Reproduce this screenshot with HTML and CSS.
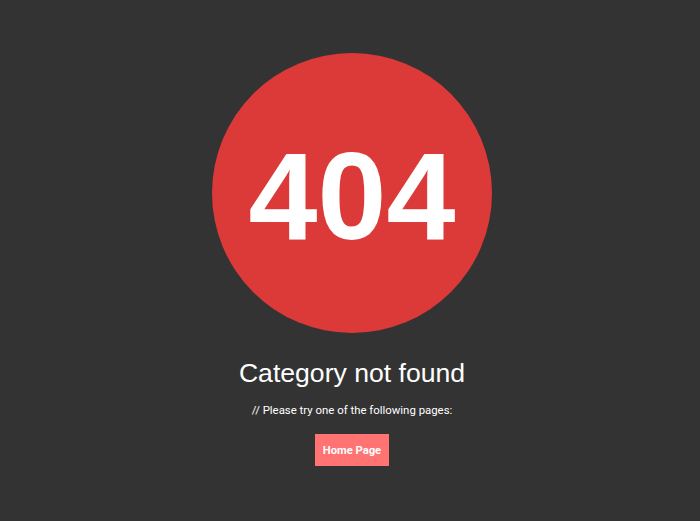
FILE: index.html
```html
<!DOCTYPE html>
<html>
<head>
<meta charset="utf-8">
<link rel="stylesheet" href="styles.css">
</head>
<body>
<main class="page">
  <div class="circle"><span class="code">404</span></div>
  <h1 class="title">Category not found</h1>
  <p class="hint">// Please try one of the following pages:</p>
  <a class="btn" href="#">Home Page</a>
</main>
</body>
</html>
```
FILE: styles.css
```css
html, body {
  margin: 0;
  padding: 0;
  background: #333333;
  height: 100%;
}
.page {
  display: flex;
  flex-direction: column;
  align-items: center;
  padding: 53px 0 0 4px;
}
.circle {
  width: 280px;
  height: 280px;
  box-sizing: border-box;
  padding-top: 6px;
  border-radius: 50%;
  background: #db3a38;
  display: flex;
  align-items: center;
  justify-content: center;
}
.code {
  font-family: "Liberation Sans", Arial, sans-serif;
  font-weight: bold;
  font-size: 124px;
  line-height: 1;
  color: #ffffff;
}
.title {
  margin: 24px 0 0;
  font-family: "Liberation Sans", Arial, sans-serif;
  font-weight: normal;
  font-size: 26.6px;
  line-height: 32px;
  color: #ffffff;
}
.hint {
  margin: 13px 0 0;
  font-family: Roboto, sans-serif;
  font-size: 11.4px;
  line-height: 16px;
  color: #ffffff;
}
.btn {
  margin-top: 16px;
  display: block;
  box-sizing: border-box;
  padding: 2px 8px 0;
  height: 32px;
  line-height: 30px;
  background: #ff7373;
  color: #ffffff;
  font-family: Roboto, sans-serif;
  font-weight: bold;
  font-size: 11.2px;
  text-decoration: none;
}
```
